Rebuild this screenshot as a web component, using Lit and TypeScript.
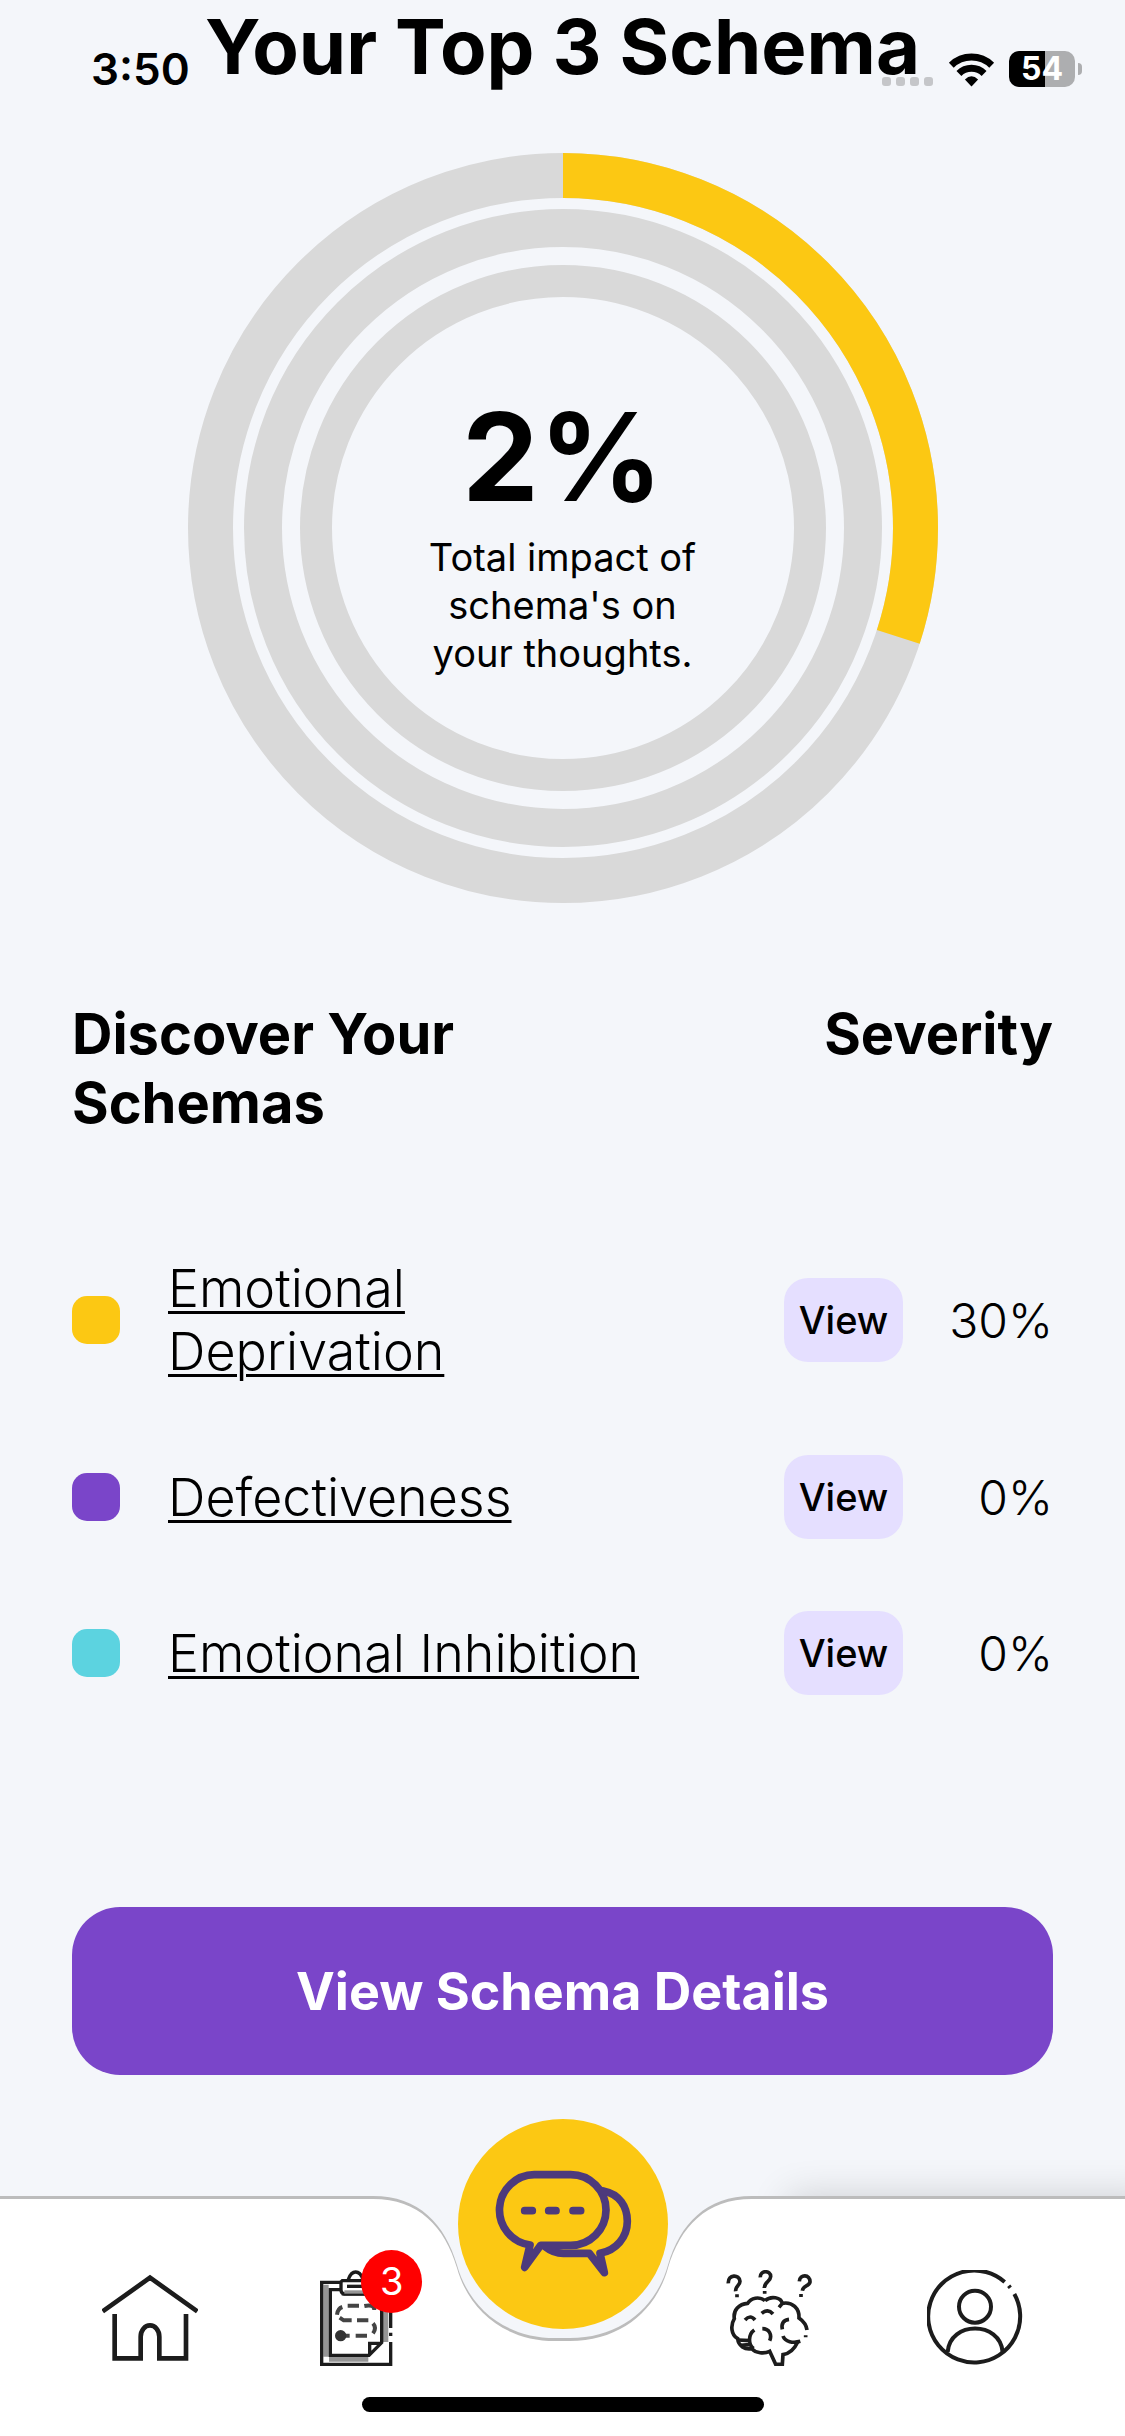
import { LitElement, html, svg, css } from "lit";
import { customElement } from "lit/decorators.js";
import { styleMap } from "lit/directives/style-map.js";

interface Schema {
  name: string;
  color: string;
  severity: number;
}

const schemas: Schema[] = [
  { name: "Emotional Deprivation", color: "#fcc813", severity: 30 },
  { name: "Defectiveness", color: "#7a45c9", severity: 0 },
  { name: "Emotional Inhibition", color: "#5cd3e0", severity: 0 },
];

const rings = [
  { radius: 352.5, width: 45 },
  { radius: 300, width: 38 },
  { radius: 247, width: 32 },
];

@customElement("status-bar")
class StatusBar extends LitElement {
  static styles = css`
    :host {
      display: flex;
      justify-content: space-between;
      align-items: center;
      height: 36px;
      padding: 51px 43px 0 91px;
      color: #000;
    }
    .time {
      font-size: 44px;
      font-weight: 600;
      line-height: 36px;
    }
    .right {
      display: flex;
      align-items: center;
    }
    .dots {
      display: flex;
      gap: 5px;
      margin: 24px 15px 0 0;
    }
    .dot {
      width: 9px;
      height: 9px;
      border-radius: 3px;
      background: #c5c6c9;
    }
    .wifi {
      width: 47px;
      height: 35px;
      margin-right: 14px;
    }
    .battery {
      width: 66px;
      height: 36px;
      border-radius: 10px;
      background: linear-gradient(90deg, #000 54%, #adaeb0 54%);
      color: #fff;
      font-size: 32px;
      font-weight: 700;
      line-height: 36px;
      text-align: center;
    }
    .nub {
      width: 4px;
      height: 12px;
      margin-left: 3px;
      border-radius: 0 4px 4px 0;
      background: #adaeb0;
    }
  `;
  render() {
    return html`
      <span class="time">3:50</span>
      <div class="right">
        <div class="dots">
          <i class="dot"></i><i class="dot"></i><i class="dot"></i><i class="dot"></i>
        </div>
        <svg class="wifi" viewBox="262 63 142 104" aria-hidden="true">
          <g fill="none" stroke="#000" stroke-width="21">
            <path d="M272 102A88 88 0 0 1 394 102" />
            <path d="M295 127A54 54 0 0 1 371 127" />
          </g>
          <path d="M313 145Q333 126 353 145L333 166Z" />
        </svg>
        <span class="battery">54</span>
        <i class="nub"></i>
      </div>
    `;
  }
}

@customElement("impact-chart")
class ImpactChart extends LitElement {
  static styles = css`
    :host {
      display: grid;
      place-items: center;
    }
    .rings,
    .summary {
      grid-area: 1 / 1;
    }
    .rings {
      width: 750px;
      max-width: 100%;
    }
    .summary {
      display: flex;
      flex-direction: column;
      align-items: center;
      gap: 12px;
      padding-top: 14px;
      text-align: center;
    }
    .total {
      font-size: 122px;
      font-weight: 700;
      line-height: 128px;
    }
    .caption {
      width: 280px;
      margin: 0;
      font-size: 38px;
      line-height: 48px;
    }
  `;
  render() {
    return html`
      <svg class="rings" viewBox="0 0 750 750" aria-hidden="true">
        <g fill="none" transform="rotate(-90 375 375)">
          ${rings.map(
            (r, i) => svg`
              <circle cx="375" cy="375" r=${r.radius} stroke="#d9d9d9" stroke-width=${r.width} />
              ${schemas[i].severity
                ? svg`<circle cx="375" cy="375" r=${r.radius} stroke=${schemas[i].color}
                    stroke-width=${r.width} pathLength="100"
                    stroke-dasharray="${schemas[i].severity} 100" />`
                : null}
            `,
          )}
        </g>
      </svg>
      <div class="summary">
        <strong class="total">2%</strong>
        <p class="caption">Total impact of schema's on your thoughts.</p>
      </div>
    `;
  }
}

@customElement("schema-list")
class SchemaList extends LitElement {
  static styles = css`
    :host {
      display: block;
    }
    .head {
      display: flex;
      justify-content: space-between;
      align-items: flex-start;
      margin-bottom: 119px;
    }
    .heading {
      max-width: 480px;
      margin: 0;
      font-size: 56px;
      font-weight: 700;
      line-height: 69px;
    }
    .rows {
      display: flex;
      flex-direction: column;
      gap: 72px;
      margin: 0;
      padding: 0;
      list-style: none;
    }
    .row {
      display: flex;
      align-items: center;
      font-weight: 300;
      line-height: 63px;
    }
    .swatch {
      flex: none;
      width: 48px;
      height: 48px;
      margin-right: 48px;
      border-radius: 15px;
    }
    .name {
      flex: 1;
      margin-right: 110px;
      font-size: 52px;
    }
    .link {
      color: #000;
      text-decoration: underline;
      text-decoration-thickness: 3px;
      text-underline-offset: 4px;
    }
    .view {
      width: 119px;
      height: 84px;
      padding: 0;
      border: 0;
      border-radius: 24px;
      background: #e5dfff;
      color: #000;
      font-family: inherit;
      font-size: 38px;
      font-weight: 500;
    }
    .severity {
      min-width: 150px;
      font-size: 48px;
      text-align: right;
    }
  `;
  render() {
    return html`
      <div class="head">
        <h2 class="heading">Discover Your Schemas</h2>
        <h2 class="heading">Severity</h2>
      </div>
      <ul class="rows">
        ${schemas.map(
          (s) => html`
            <li class="row">
              <span class="swatch" style=${styleMap({ background: s.color })}></span>
              <span class="name"><a class="link" href="#">${s.name}</a></span>
              <button class="view" type="button">View</button>
              <span class="severity">${s.severity}%</span>
            </li>
          `,
        )}
      </ul>
    `;
  }
}

@customElement("tab-bar")
class TabBar extends LitElement {
  static styles = css`
    :host {
      display: block;
      position: relative;
    }
    .backdrop {
      position: absolute;
      inset: 0;
      display: flex;
    }
    .side {
      flex: 1;
      border-top: 3px solid #bcbcbc;
      background: #fff;
    }
    .raised {
      box-shadow: 30px 0 36px rgba(0, 0, 0, 0.16);
      clip-path: inset(-48px 0 0 0);
    }
    .notch {
      flex: none;
      width: 391px;
      height: 240px;
    }
    .tabs {
      position: relative;
      display: grid;
      grid-template-columns: repeat(5, 1fr);
      justify-items: center;
      padding: 74px 47px 70px;
    }
    .tab {
      position: relative;
      width: 96px;
      height: 96px;
    }
    .icon {
      display: block;
      width: 100%;
      height: 100%;
    }
    .badge {
      position: absolute;
      top: -20px;
      right: -18px;
      width: 61px;
      height: 63px;
      border-radius: 50%;
      background: #f00;
      color: #fff;
      font-size: 38px;
      line-height: 63px;
      text-align: center;
    }
    .chat {
      position: absolute;
      top: -77px;
      left: 50%;
      width: 210px;
      height: 210px;
      margin-left: -105px;
      padding: 0;
      border: 0;
      border-radius: 50%;
      background: #fcc813;
    }
    .indicator {
      position: absolute;
      bottom: 24px;
      left: 50%;
      width: 402px;
      height: 15px;
      margin-left: -201px;
      border-radius: 8px;
      background: #000;
    }
  `;
  render() {
    const edge =
      "H6C52 0 78 28 90 69C102 112 138 142 188 142H203C253 142 289 112 301 69C313 28 339 0 385 0H391V240H0Z";
    return html`
      <div class="backdrop">
        <div class="side"></div>
        <svg class="notch" viewBox="0 0 391 240" aria-hidden="true">
          <path fill="#bcbcbc" d="M0 0${edge}" />
          <path fill="#fff" d="M0 0${edge}" transform="translate(0 3)" />
        </svg>
        <div class="side raised"></div>
      </div>
      <nav class="tabs" aria-label="Main">
        <a class="tab" href="#" aria-label="Home">
          <svg class="icon" viewBox="66 90 288 288" fill="none" stroke="#1c1c1c" stroke-width="14">
            <path d="M68 214L210 113L352 214M104 222V355H182V290A28 34 0 0 1 238 290V355H318V222" />
          </svg>
        </a>
        <a class="tab" href="#" aria-label="Tasks, 3 new">
          <svg class="icon" viewBox="681 90 288 288" fill="none" stroke="#1c1c1c" stroke-width="10">
            <path stroke="#959595" stroke-width="16" d="M735 134V350M744 357H862M782 160H880M914 160V306" />
            <path d="M778 127H722V373H929V306M929 288V278M929 264V127H870" />
            <path d="M778 149H748V346H864L902 308V149H880M866 344V310H900" />
            <path fill="#fff" d="M802 118Q810 96 824 96T846 118" />
            <path fill="#fff" d="M784 122H868V162H790Q780 160 780 150V126Z" />
            <path stroke="#959595" d="M790 156H866" />
            <path d="M798 139H860" />
            <path stroke="#444" stroke-width="12"
              d="M800 197H834M850 198Q880 192 880 210M784 201Q770 206 768 224M776 233L788 241H812M828 241H862M876 250Q888 264 876 280M824 287H858M792 287H806" />
            <circle cx="779" cy="287" r="12" fill="#333" stroke="#333" />
          </svg>
          <span class="badge">3</span>
        </a>
        <span></span>
        <a class="tab" href="#" aria-label="Insights">
          <svg class="icon" viewBox="66 90 288 288" fill="none" stroke="#1c1c1c" stroke-width="11">
            <path d="M88 130C86 102 122 102 123 124C123 138 108 138 110 154M114 163V172" />
            <path d="M184 112C182 90 216 90 215 110C214 126 196 124 196 144M197 153V161" />
            <path d="M301 124C302 102 334 102 333 126C330 140 312 136 310 152M306 162V171" />
            <path d="M198 182C180 168 156 174 146 190C120 192 102 210 106 236C94 256 96 284 116 296C118 318 138 330 158 326C170 340 196 342 212 334L230 373H250L252 344C274 340 286 328 296 306" />
            <path d="M198 182C216 166 246 172 250 190C280 184 302 206 300 234C314 244 322 254 324 270M320 286V292M304 304C282 310 258 306 252 288M250 268C246 250 254 240 270 238M250 190L240 202" />
            <path d="M138 240Q154 222 168 240M188 220Q206 204 222 222M166 270C146 284 148 316 164 326M190 266C210 266 220 284 212 302M118 300L152 302M126 316L150 314" />
          </svg>
        </a>
        <a class="tab" href="#" aria-label="Profile">
          <svg class="icon" viewBox="681 90 288 288" fill="none" stroke="#1c1c1c" stroke-width="12">
            <path d="M914 126A138 138 0 1 0 943 162M926 137L931 143" />
            <circle cx="825" cy="200" r="48" />
            <path d="M743 336C750 242 900 242 908 336" />
          </svg>
        </a>
      </nav>
      <button class="chat" type="button" aria-label="Chat">
        <svg class="icon" viewBox="54 27 630 630" fill="none" stroke="#4d3a7c" stroke-width="23"
          stroke-linecap="round" stroke-linejoin="round">
          <path d="M283 194H392A106 106 0 0 1 392 406H302L254 472L270 405A106 106 0 0 1 283 194Z" />
          <path d="M490 243C538 252 562 290 562 334C562 382 528 422 480 430L493 488L448 430H370Q340 430 318 412" />
          <path d="M254 302H277M326 302H348M399 302H422" />
        </svg>
      </button>
      <div class="indicator"></div>
    `;
  }
}

@customElement("app-root")
class AppRoot extends LitElement {
  static styles = css`
    :host {
      display: flex;
      flex-direction: column;
      position: relative;
      min-height: 100vh;
      background: #f4f6fa;
      color: #000;
      font-family: Inter, "Open Sans", sans-serif;
    }
    .status {
      position: absolute;
      top: 0;
      left: 0;
      right: 0;
    }
    .content {
      flex: 1;
      padding: 0 72px;
    }
    .title {
      margin: 0 0 60px;
      font-size: 76px;
      font-weight: 700;
      line-height: 93px;
      text-align: center;
      white-space: nowrap;
    }
    .schemas {
      margin: 97px 0 212px;
    }
    .details {
      display: block;
      width: 100%;
      height: 168px;
      border: 0;
      border-radius: 48px;
      background: #7a45c9;
      color: #fff;
      font-family: inherit;
      font-size: 52px;
      font-weight: 700;
    }
  `;
  render() {
    return html`
      <main class="content">
        <h1 class="title">Your Top 3 Schema</h1>
        <impact-chart></impact-chart>
        <schema-list class="schemas"></schema-list>
        <button class="details" type="button">View Schema Details</button>
      </main>
      <tab-bar></tab-bar>
      <status-bar class="status"></status-bar>
    `;
  }
}
